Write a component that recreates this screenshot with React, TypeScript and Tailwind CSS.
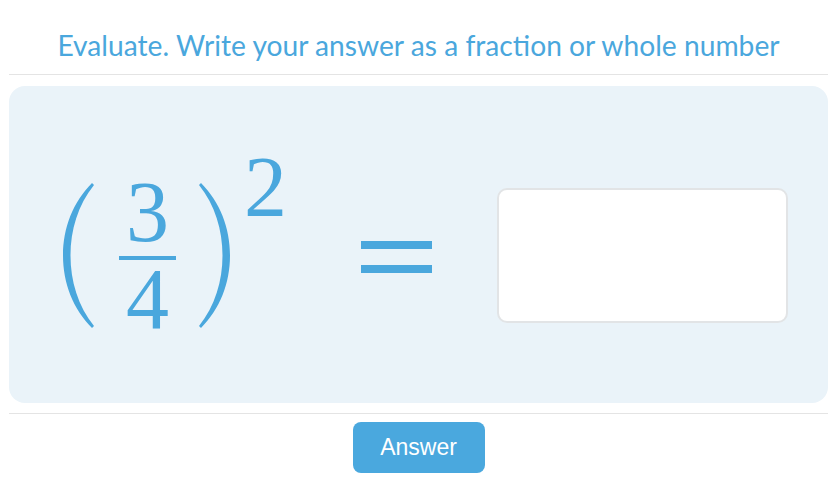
import React from "react";

const blue = "text-[#4aa7dd]";

const Paren = ({ flip = false }: { flip?: boolean }) => (
  <svg
    width="31"
    height="145"
    viewBox="0 0 31 145"
    className={flip ? "-scale-x-100" : ""}
  >
    <path
      d="M29 0 L31 2 C15 22 7.5 47 7.5 72.5 C7.5 98 15 123 31 143 L29 145 C10 126 0 100 0 72.5 C0 45 10 19 29 0 Z"
      fill="#4aa7dd"
    />
  </svg>
);

export default function App() {
  return (
    <div className="w-[840px] h-[501px] bg-white">
      <div className="ml-[9px] w-[819px]">
        {/* Prompt */}
        <div className="h-[75px] pt-[31px] border-b border-[#e4e4e4]">
          <p
            className={`text-center text-[28.2px] leading-none ${blue}`}
            style={{ fontFamily: "Lato, 'Open Sans', sans-serif" }}
          >
            Evaluate. Write your answer as a fraction or whole number
          </p>
        </div>

        {/* Question panel */}
        <div className="mt-[11px] h-[317px] rounded-[16px] bg-[#eaf3f9] pl-[54px] pt-[21px] flex items-center">
          <div
            className={`flex items-center ${blue}`}
            style={{ fontFamily: "'Liberation Serif', serif" }}
          >
            <Paren />
            <div className="ml-[25px] w-[57px] flex flex-col items-center">
              <span className="text-[86px] leading-none">3</span>
              <div className="mt-[1px] h-[4px] w-[57px] bg-[#4aa7dd]" />
              <span className="-mt-[4px] text-[86px] leading-none">4</span>
            </div>
            <div className="ml-[23px]">
              <Paren flip />
            </div>
            <span className="ml-[14px] self-start -mt-[25px] text-[86px] leading-none">
              2
            </span>
            <div className="ml-[74px] mt-[3px] flex flex-col gap-[16px]">
              <div className="h-[8px] w-[71px] bg-[#4aa7dd]" />
              <div className="h-[8px] w-[71px] bg-[#4aa7dd]" />
            </div>
            <input
              type="text"
              className="ml-[65px] h-[135px] w-[291px] rounded-[10px] border-2 border-[#e2e4e6] bg-white outline-none"
            />
          </div>
        </div>

        <div className="mt-[10px] h-px bg-[#e4e4e4]" />

        {/* Submit */}
        <div className="mt-[8px] flex justify-center">
          <button
            className="h-[51px] w-[132px] rounded-[8px] bg-[#4aa8de] text-[23px] text-white"
            style={{ fontFamily: "'Liberation Sans', Arial, sans-serif" }}
          >
            Answer
          </button>
        </div>
      </div>
    </div>
  );
}
